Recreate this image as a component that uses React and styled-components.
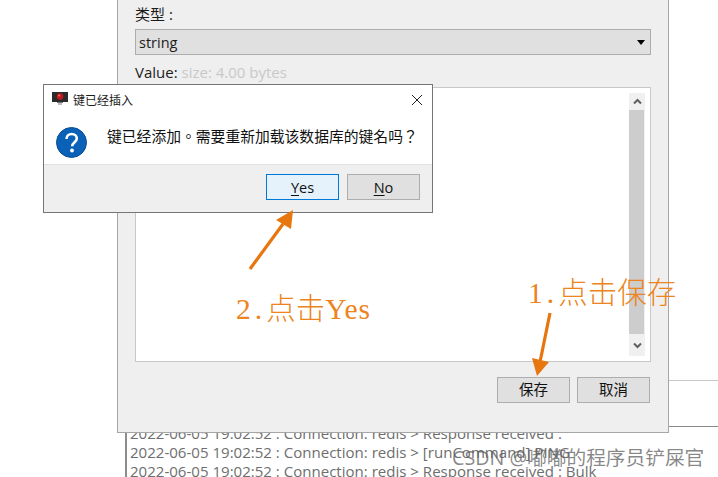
import React from "react";
import styled, { createGlobalStyle } from "styled-components";

const UI = `"Open Sans", "Noto Sans CJK SC", sans-serif`;
const Global = createGlobalStyle`
  html, body { margin: 0; padding: 0; background: #fff; }
`;

const Desktop = styled.div`
  position: relative;
  width: 718px;
  height: 477px;
  overflow: hidden;
  background: #fff;
  font-family: ${UI};
`;

const LogWindow = styled.div`
  position: absolute;
  left: 125px;
  top: 380px;
  width: 593px;
  height: 97px;
  box-sizing: border-box;
  border-top: 1px solid #c8c8c8;
`;
const LogBody = styled.div`
  margin-top: 45px;
  height: 52px;
  box-sizing: border-box;
  border-top: 1px solid #8a8a8a;
  border-left: 2px solid #8c8c8c;
  padding: 0 0 0 3px;
  overflow: hidden;
`;
const LogLine = styled.div`
  font-size: 15.05px;
  line-height: 19px;
  color: #6e6e6e;
  white-space: nowrap;
  margin-top: ${(p) => (p.$first ? "-3px" : "0")};
`;

const Panel = styled.div`
  position: absolute;
  left: 117px;
  top: -1px;
  width: 552px;
  height: 434px;
  box-sizing: border-box;
  background: #efefef;
  border: 1px solid #a6a6a6;
  padding: 5px 17px 0;
  display: flex;
  flex-direction: column;
`;
const FieldLabel = styled.div`
  height: 20px;
  line-height: 18px;
  font-size: 15px;
  color: #1c1c1c;
  white-space: nowrap;
  margin-top: ${(p) => p.$gap || 0}px;
`;
const Muted = styled.span`
  color: #c9c9c9;
`;
const Combo = styled.div`
  margin-top: 4px;
  height: 26px;
  box-sizing: border-box;
  background: #e0e0e0;
  border: 1px solid #adadad;
  padding: 0 5px 0 3px;
  display: flex;
  align-items: center;
  justify-content: space-between;
  font-size: 14.5px;
  color: #1c1c1c;
`;
const ComboArrow = styled.span`
  width: 0;
  height: 0;
  border-left: 4px solid transparent;
  border-right: 4px solid transparent;
  border-top: 5px solid #000;
`;
const Editor = styled.div`
  margin-top: 4px;
  height: 275px;
  box-sizing: border-box;
  background: #fff;
  border: 1px solid #c8c8c8;
  padding: 5px 5px 5px 0;
  display: flex;
  justify-content: flex-end;
`;
const Scrollbar = styled.div`
  width: 16px;
  background: #f0f0f0;
  display: flex;
  flex-direction: column;
  align-items: stretch;
`;
const ScrollCap = styled.div`
  height: ${(p) => p.$h}px;
  display: flex;
  align-items: center;
  justify-content: center;
`;
const ScrollThumb = styled.div`
  flex: 1;
  margin: 0 1px 0 0;
  background: #cdcdcd;
`;
const ButtonRow = styled.div`
  margin-top: ${(p) => p.$top}px;
  display: flex;
  justify-content: flex-end;
  gap: ${(p) => p.$gap}px;
  padding-right: ${(p) => p.$right}px;
`;
const Btn = styled.div`
  width: 73px;
  height: 26px;
  box-sizing: border-box;
  display: flex;
  align-items: center;
  justify-content: center;
  font-size: 14.5px;
  color: #111;
  padding-bottom: ${(p) => (p.$cjk ? "3px" : "0")};
  background: ${(p) => (p.$primary ? "#e5f1fb" : "#e0e0e0")};
  border: 1px solid ${(p) => (p.$primary ? "#0078d7" : "#adadad")};
`;
const Mnemonic = styled.span`
  text-decoration: underline;
  text-underline-offset: 2px;
  text-decoration-thickness: 1px;
`;

const Dialog = styled.div`
  position: absolute;
  left: 43px;
  top: 84px;
  width: 390px;
  height: 129px;
  box-sizing: border-box;
  background: #fff;
  border: 1px solid #767676;
  display: flex;
  flex-direction: column;
`;
const TitleBar = styled.div`
  height: 29px;
  display: flex;
  align-items: center;
  padding: 0 9px 0 8px;
  font-size: 12px;
  color: #1c1c1c;
`;
const TitleText = styled.span`
  margin-left: 5px;
  flex: 1;
`;
const MsgRow = styled.div`
  height: 50px;
  display: flex;
  align-items: flex-start;
  padding: 13px 0 0 12px;
  box-sizing: border-box;
`;
const MsgText = styled.div`
  margin-left: 20px;
  margin-top: -1px;
  font-family: "Open Sans", "Noto Sans CJK TC", sans-serif;
  font-size: 14.8px;
  line-height: 20px;
  color: #111;
  white-space: nowrap;
`;
const DialogFooter = styled.div`
  flex: 1;
  background: #efefef;
  border-top: 1px solid #dfdfdf;
`;

const Overlay = styled.svg`
  position: absolute;
  left: 0;
  top: 0;
  pointer-events: none;
`;
const Note = styled.div`
  position: absolute;
  left: ${(p) => p.$x}px;
  top: ${(p) => p.$y}px;
  font-family: "Liberation Serif", "Noto Sans CJK SC", serif;
  font-size: 29.5px;
  font-weight: 300;
  line-height: 34px;
  color: #ec8420;
  white-space: nowrap;
`;
const NoteLatin = styled.span`
  letter-spacing: ${(p) => p.$track}px;
`;
const Watermark = styled.div`
  position: absolute;
  left: 452px;
  top: 444px;
  font-family: ${UI};
  font-size: 19.7px;
  line-height: 27px;
  color: rgba(90, 90, 90, 0.72);
  white-space: nowrap;
`;

const AppIcon = () => (
  <svg width="16" height="15" viewBox="0 0 16 15">
    <rect x="0" y="0" width="16" height="10" fill="#2b2b2b" />
    <rect x="5" y="10" width="6" height="1" fill="#777" />
    <rect x="6" y="11" width="4" height="2" fill="#bbb" />
    <circle cx="8" cy="4.5" r="3.2" fill="#c8161d" />
    <circle cx="7.2" cy="3.6" r="1" fill="#ee7b7b" />
  </svg>
);
const CloseIcon = () => (
  <svg width="12" height="12" viewBox="0 0 12 12">
    <path d="M1 1 L11 11 M11 1 L1 11" stroke="#222" strokeWidth="1" fill="none" />
  </svg>
);
const QuestionIcon = () => (
  <svg width="31" height="31" viewBox="0 0 31 31">
    <circle cx="15.5" cy="15.5" r="15" fill="#0a62b8" stroke="#084d90" strokeWidth="1" />
    <path
      d="M10.5 12 C10.5 8.6 13 7 15.7 7 C18.6 7 20.8 8.8 20.8 11.6 C20.8 15 16.2 15.6 16.2 19.2"
      stroke="#fff"
      strokeWidth="2.6"
      fill="none"
    />
    <circle cx="16" cy="23.5" r="1.9" fill="#fff" />
  </svg>
);
const Chevron = ({ up }) => (
  <svg width="9" height="7" viewBox="0 0 9 7">
    <path
      d={up ? "M1 5.5 L4.5 2 L8 5.5" : "M1 1.5 L4.5 5 L8 1.5"}
      stroke="#606060"
      strokeWidth="2"
      fill="none"
    />
  </svg>
);

export default function App() {
  return (
    <Desktop>
      <Global />
      <LogWindow>
        <LogBody>
          <LogLine $first>2022-06-05 19:02:52 : Connection: redis &gt; Response received :</LogLine>
          <LogLine>2022-06-05 19:02:52 : Connection: redis &gt; [runCommand] PING</LogLine>
          <LogLine>2022-06-05 19:02:52 : Connection: redis &gt; Response received : Bulk</LogLine>
        </LogBody>
      </LogWindow>
      <Panel>
        <FieldLabel>类型 :</FieldLabel>
        <Combo>
          string
          <ComboArrow />
        </Combo>
        <FieldLabel $gap={8}>
          Value: <Muted>size: 4.00 bytes</Muted>
        </FieldLabel>
        <Editor>
          <Scrollbar>
            <ScrollCap $h={17}>
              <Chevron up />
            </ScrollCap>
            <ScrollThumb />
            <ScrollCap $h={22}>
              <Chevron />
            </ScrollCap>
          </Scrollbar>
        </Editor>
        <ButtonRow $top={15} $gap={7} $right={1}>
          <Btn $cjk>保存</Btn>
          <Btn $cjk>取消</Btn>
        </ButtonRow>
      </Panel>
      <Dialog>
        <TitleBar>
          <AppIcon />
          <TitleText>键已经插入</TitleText>
          <CloseIcon />
        </TitleBar>
        <MsgRow>
          <QuestionIcon />
          <MsgText>键已经添加。需要重新加载该数据库的键名吗？</MsgText>
        </MsgRow>
        <DialogFooter>
          <ButtonRow $top={9} $gap={8} $right={12}>
            <Btn $primary>
              <span>
                <Mnemonic>Y</Mnemonic>es
              </span>
            </Btn>
            <Btn>
              <span>
                <Mnemonic>N</Mnemonic>o
              </span>
            </Btn>
          </ButtonRow>
        </DialogFooter>
      </Dialog>
      <Overlay width="718" height="477" viewBox="0 0 718 477">
        <g fill="#e8760f">
          <path d="M250 269 L283 224" stroke="#e8760f" strokeWidth="3.2" fill="none" />
          <path d="M293 210 L276 220 L291 229 Z" />
          <path d="M550 313 L540 362" stroke="#e8760f" strokeWidth="3.2" fill="none" />
          <path d="M537 376 L532 358 L549 362 Z" />
        </g>
      </Overlay>
      <Note $x={236} $y={292}>
        <NoteLatin $track={4}>2.</NoteLatin>点击<NoteLatin $track={1}>Yes</NoteLatin>
      </Note>
      <Note $x={528} $y={276}>
        <NoteLatin $track={4}>1.</NoteLatin>点击保存
      </Note>
      <Watermark>CSDN @嘟嘟的程序员铲屎官</Watermark>
    </Desktop>
  );
}
